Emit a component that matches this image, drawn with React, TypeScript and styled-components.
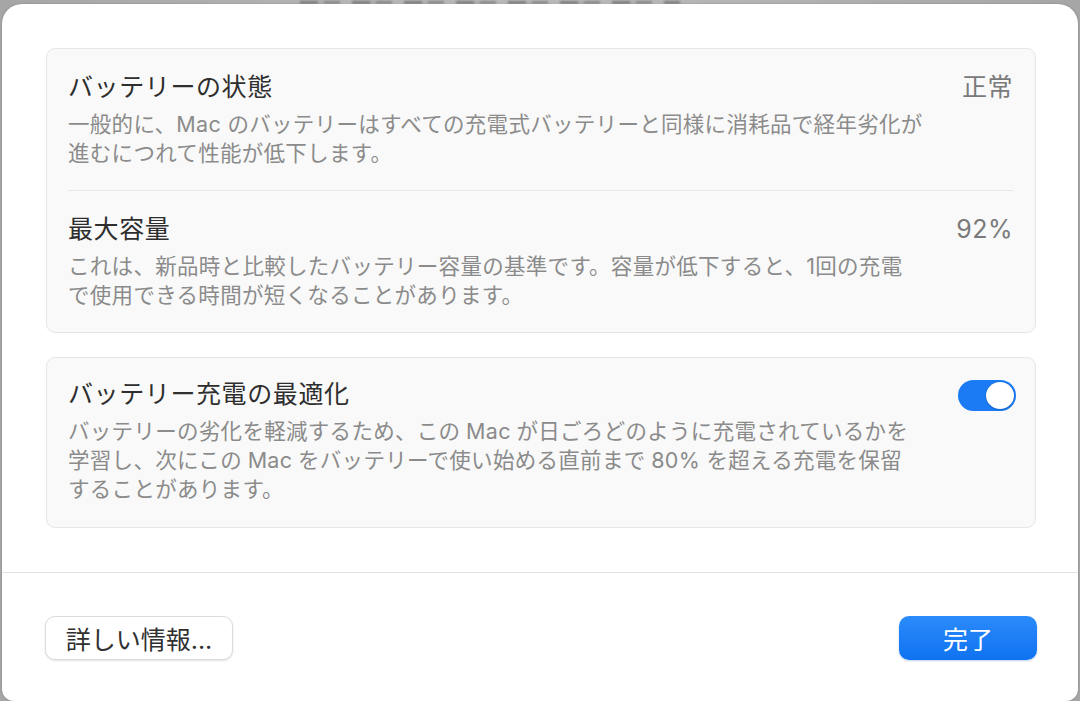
import { FC } from 'react'
import styled, { createGlobalStyle } from 'styled-components'

type rowType = {
  title: string
  lines: string[]
  value?: string
}

const healthRows: rowType[] = [
  {
    title: 'バッテリーの状態',
    lines: [
      '一般的に、Mac のバッテリーはすべての充電式バッテリーと同様に消耗品で経年劣化が',
      '進むにつれて性能が低下します。',
    ],
    value: '正常',
  },
  {
    title: '最大容量',
    lines: [
      'これは、新品時と比較したバッテリー容量の基準です。容量が低下すると、1回の充電',
      'で使用できる時間が短くなることがあります。',
    ],
    value: '92%',
  },
]

// U+2005 spaces mimic the mac's auto-spacing between kana and latin
const optimizeRow: rowType = {
  title: 'バッテリー充電の最適化',
  lines: [
    'バッテリーの劣化を軽減するため、この\u2005Mac\u2005が日ごろどのように充電されているかを',
    '学習し、次にこの\u2005Mac\u2005をバッテリーで使い始める直前まで\u200580% を超える充電を保留',
    'することがあります。',
  ],
}

const RowText: FC<{ row: rowType }> = ({ row }) => {
  return (
    <STextBlock>
      <STitle>{row.title}</STitle>
      <SDescription>
        {row.lines.map((line, i) => (
          <span key={i}>
            {line}
            {i < row.lines.length - 1 && <br />}
          </span>
        ))}
      </SDescription>
    </STextBlock>
  )
}

const App: FC = () => {
  return (
    <>
      <GlobalStyle />
      <SPage>
        <SBackdrop>
          <SSmudge />
        </SBackdrop>
        <SDialog>
          <SContent>
            <SCard>
              {healthRows.map((row, index) => (
                <SRow key={row.title} $divided={index > 0}>
                  <RowText row={row} />
                  <SValue>{row.value}</SValue>
                </SRow>
              ))}
            </SCard>
            <SCard>
              <SRow $tight>
                <RowText row={optimizeRow} />
                <SToggle type="button" aria-pressed="true">
                  <SKnob />
                </SToggle>
              </SRow>
            </SCard>
          </SContent>
          <SSeparator />
          <SFooter>
            <SButton type="button">詳しい情報...</SButton>
            <SButton type="button" $primary>
              完了
            </SButton>
          </SFooter>
        </SDialog>
      </SPage>
    </>
  )
}

export default App

const GlobalStyle = createGlobalStyle`
  html, body {
    margin: 0;
    padding: 0;
    background: #b3b3b3;
  }
  body {
    font-family: Inter, "Noto Sans CJK JP", sans-serif;
    -webkit-font-smoothing: antialiased;
  }
`

const SPage = styled.div`
  height: 701px;
  display: flex;
  flex-direction: column;
  overflow: hidden;
  background: linear-gradient(90deg, #a6a6a6 0%, #bcbcbc 50%, #a6a6a6 100%);
`

const SBackdrop = styled.div`
  height: 4px;
  flex: none;
  display: flex;
  justify-content: center;
  align-items: flex-end;
  overflow: hidden;
`

// blurred title of the window behind the sheet
const SSmudge = styled.div`
  width: 380px;
  height: 3px;
  margin-right: 100px;
  background: repeating-linear-gradient(
    90deg,
    #7c7c7c 0 18px,
    #a9a9a9 18px 24px,
    #888888 24px 40px,
    #b5b5b5 40px 52px
  );
  filter: blur(0.8px);
`

const SDialog = styled.div`
  flex: 1;
  margin: 0 2px;
  background: #ffffff;
  border-radius: 20px 20px 12px 12px;
  display: flex;
  flex-direction: column;
  box-shadow: 0 0 2px rgba(0, 0, 0, 0.25);
`

const SContent = styled.div`
  display: flex;
  flex-direction: column;
  gap: 24px;
  padding: 44px 42px 0 44px;
`

const SCard = styled.div`
  background: #f9f9f9;
  border: 1px solid #e6e6e6;
  border-radius: 9px;
  padding: 0 22px 0 21px;
`

const SRow = styled.div<{ $divided?: boolean; $tight?: boolean }>`
  display: flex;
  justify-content: space-between;
  align-items: flex-start;
  padding: ${({ $tight }) => ($tight ? '19px 0 23px' : '21px 0 22px')};
  border-top: ${({ $divided }) => ($divided ? '1px solid #e8e8e8' : 'none')};
`

const STextBlock = styled.div`
  display: flex;
  flex-direction: column;
  gap: 6px;
`

const STitle = styled.div`
  font-size: 25px;
  line-height: 34px;
  letter-spacing: 0.6px;
  color: #2e2e2e;
`

const SDescription = styled.div`
  font-size: 21.5px;
  line-height: 29px;
  letter-spacing: 0.3px;
  color: #8b8b8b;
  white-space: nowrap;
`

const SValue = styled.div`
  font-size: 25px;
  line-height: 34px;
  letter-spacing: 0.5px;
  color: #7a7a7a;
`

const SToggle = styled.button`
  margin: 3px -3px 0 0;
  width: 58px;
  height: 31px;
  padding: 2px;
  border: none;
  border-radius: 16px;
  background: #1a7bf5;
  display: flex;
  justify-content: flex-end;
  align-items: center;
`

const SKnob = styled.span`
  width: 28px;
  height: 27px;
  border-radius: 50%;
  background: #ffffff;
  box-shadow: 0 0 1px rgba(0, 0, 0, 0.3), 0 1px 2px rgba(0, 0, 0, 0.15);
`

const SSeparator = styled.div`
  margin-top: 44px;
  height: 1px;
  background: #e3e3e3;
`

const SFooter = styled.div`
  display: flex;
  justify-content: space-between;
  align-items: center;
  padding: 43px 41px 0 43px;
`

const SButton = styled.button<{ $primary?: boolean }>`
  height: 44px;
  min-width: ${({ $primary }) => ($primary ? '138px' : '188px')};
  padding: 0 16px;
  border-radius: 10px;
  font-family: Inter, "Noto Sans CJK JP", sans-serif;
  font-size: 25px;
  color: ${({ $primary }) => ($primary ? '#ffffff' : '#303030')};
  border: ${({ $primary }) => ($primary ? 'none' : '1px solid #dcdcdc')};
  background: ${({ $primary }) =>
    $primary ? 'linear-gradient(180deg, #2b8bfb 0%, #0f72f0 100%)' : '#ffffff'};
  box-shadow: ${({ $primary }) =>
    $primary ? '0 1px 2px rgba(0, 80, 200, 0.25)' : '0 1px 2px rgba(0, 0, 0, 0.12)'};
`
